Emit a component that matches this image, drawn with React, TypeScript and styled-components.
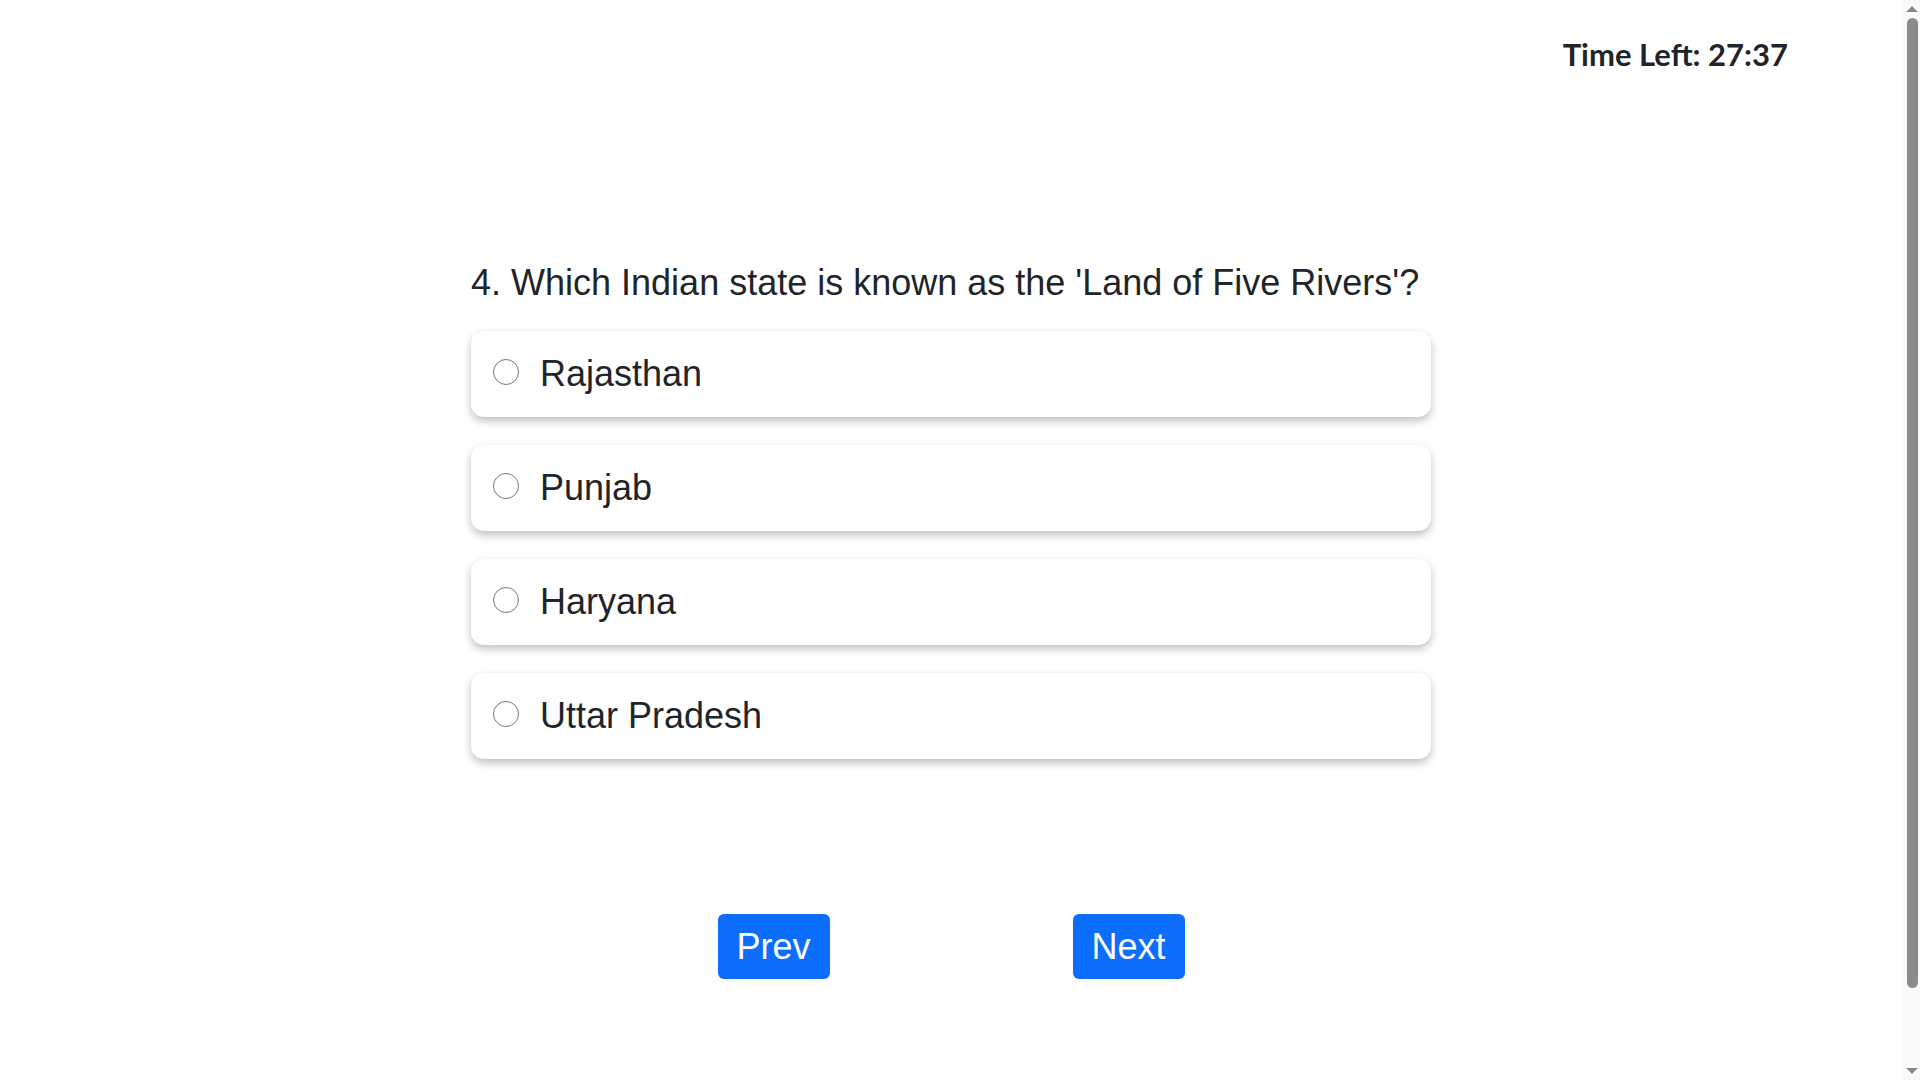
import { useState } from 'react';
import styled, { createGlobalStyle } from 'styled-components';

const question = {
    id: 4,
    text: "Which Indian state is known as the 'Land of Five Rivers'?",
    options: ['Rajasthan', 'Punjab', 'Haryana', 'Uttar Pradesh'],
};

const formatTime = (secs: number) => {
    const m = Math.floor(secs / 60);
    const s = secs % 60;
    return `${m}:${s < 10 ? '0' : ''}${s}`;
};

const App = () => {
    const [selected, setSelected] = useState<string | null>(null);
    const [timeLeft] = useState(27 * 60 + 37);

    return (
        <>
            <GlobalStyle />
            <Page>
                <TimerBar>
                    <Timer>Time Left: {formatTime(timeLeft)}</Timer>
                </TimerBar>

                <Quiz>
                    <Question>{question.id}. {question.text}</Question>
                    <OptionList>
                        {question.options.map((opt) => (
                            <OptionCard key={opt}>
                                <Radio
                                    type="radio"
                                    name="answer"
                                    value={opt}
                                    checked={selected === opt}
                                    onChange={() => setSelected(opt)}
                                />
                                {opt}
                            </OptionCard>
                        ))}
                    </OptionList>
                </Quiz>

                <NavRow>
                    <NavButton>Prev</NavButton>
                    <NavButton>Next</NavButton>
                </NavRow>
            </Page>

            {/* headless browser hides the real scrollbar, so draw the classic one */}
            <ScrollRail aria-hidden>
                <Arrow $dir="up" />
                <Thumb />
                <Arrow $dir="down" />
            </ScrollRail>
        </>
    );
};

const GlobalStyle = createGlobalStyle`
    html::-webkit-scrollbar {
        display: none;
    }

    body {
        margin: 0;
        padding-right: 18px;
        background: #fff;
        color: #212529;
        font-family: "Liberation Sans", Arial, sans-serif;
    }
`;

const Page = styled.main`
    display: flex;
    flex-direction: column;
    padding-bottom: 190px;
`;

const TimerBar = styled.header`
    display: flex;
    justify-content: flex-end;
    padding: 35px 114px 0 0;
`;

const Timer = styled.div`
    font-family: Lato, "Open Sans", sans-serif;
    font-weight: 700;
    font-size: 31px;
    line-height: 38px;
    color: #212529;
`;

const Quiz = styled.section`
    width: 960px;
    margin: 188px auto 0;
`;

const Question = styled.h2`
    margin: 0 0 27px;
    font-size: 36px;
    font-weight: 400;
    line-height: 43px;
    color: #212529;
`;

const OptionList = styled.div`
    display: flex;
    flex-direction: column;
    gap: 28px;
`;

const OptionCard = styled.label`
    display: flex;
    align-items: center;
    gap: 21px;
    height: 86px;
    padding: 0 22px;
    box-sizing: border-box;
    background: #fff;
    border-radius: 13px;
    box-shadow: 0 4px 8px rgba(0, 0, 0, 0.25);
    font-size: 36px;
    color: #212529;
    cursor: pointer;
`;

const Radio = styled.input`
    width: 26px;
    height: 26px;
    margin: 0 0 4px;
    flex-shrink: 0;
    accent-color: #0d6efd;
`;

const NavRow = styled.nav`
    display: flex;
    justify-content: center;
    gap: 243px;
    margin-top: 155px;
`;

const NavButton = styled.button`
    width: 112px;
    height: 65px;
    padding: 0;
    border: none;
    border-radius: 6px;
    background: #0d6efd;
    color: #fff;
    font-family: "Liberation Sans", Arial, sans-serif;
    font-size: 36px;
    cursor: pointer;
`;

const ScrollRail = styled.div`
    position: fixed;
    top: 0;
    right: 0;
    bottom: 0;
    width: 18px;
    display: flex;
    flex-direction: column;
    align-items: center;
    background: #fafafa;
`;

const Thumb = styled.div`
    flex: 1;
    width: 11px;
    margin: 6px 0 80px 2px;
    border-radius: 6px;
    background: #8b8b8b;
`;

const Arrow = styled.div<{ $dir: 'up' | 'down' }>`
    width: 0;
    height: 0;
    margin: ${({ $dir }) => ($dir === 'up' ? '6px 0 0 2px' : '0 0 6px 2px')};
    border-left: 6px solid transparent;
    border-right: 6px solid transparent;
    ${({ $dir }) => ($dir === 'up' ? 'border-bottom' : 'border-top')}: 6px solid #8b8b8b;
`;

export default App;
